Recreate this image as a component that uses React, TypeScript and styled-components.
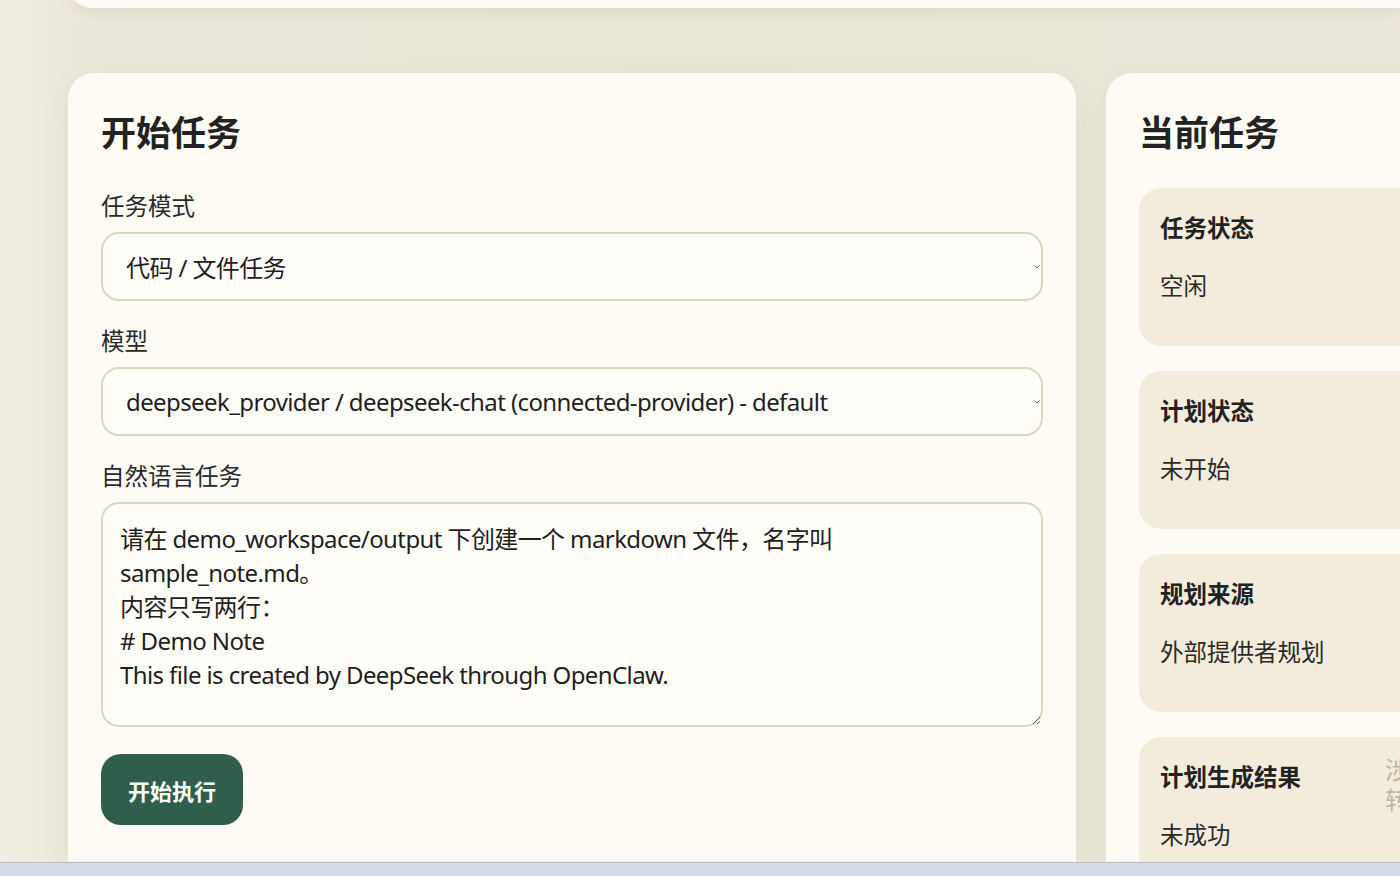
import styled, { createGlobalStyle } from 'styled-components';

const GlobalStyle = createGlobalStyle`
  html, body {
    margin: 0;
    padding: 0;
    height: 100%;
    overflow: hidden;
  }
  body {
    background: #efebdf;
    font-family: 'Noto Sans', 'Noto Sans CJK SC', sans-serif;
    color: #222;
  }
  * {
    box-sizing: border-box;
  }
`;

const statusList = [
  { id: 1, title: '任务状态', value: '空闲' },
  { id: 2, title: '计划状态', value: '未开始' },
  { id: 3, title: '规划来源', value: '外部提供者规划' },
  { id: 4, title: '计划生成结果', value: '未成功', hint: '涉及\n转换' },
];

const taskText = `请在 demo_workspace/output 下创建一个 markdown 文件，名字叫
sample_note.md。
内容只写两行：
# Demo Note
This file is created by DeepSeek through OpenClaw.`;

const Chevron = () => (
  <svg width='6' height='4' viewBox='0 0 6 4'>
    <path d='M0.5 0.5 L3 3 L5.5 0.5' fill='none' stroke='#555' strokeWidth='0.9' />
  </svg>
);

const App = () => {
  return (
    <Page>
      <GlobalStyle />
      <TopCard />
      <Columns>
        <Panel>
          <Title>开始任务</Title>
          <Field>
            <Label>任务模式</Label>
            <SelectBox>
              <span>代码 / 文件任务</span>
              <Chevron />
            </SelectBox>
          </Field>
          <Field>
            <Label>模型</Label>
            <SelectBox>
              <span>deepseek_provider / deepseek-chat (connected-provider) - default</span>
              <Chevron />
            </SelectBox>
          </Field>
          <Field>
            <Label>自然语言任务</Label>
            <TextArea defaultValue={taskText} />
          </Field>
          <RunButton>开始执行</RunButton>
        </Panel>
        <SidePanel>
          <Title>当前任务</Title>
          <CardList>
            {statusList.map((el) => (
              <StatusCard key={el.id}>
                <CardBody>
                  <CardTitle>{el.title}</CardTitle>
                  <CardValue>{el.value}</CardValue>
                </CardBody>
                {el.hint && <CardHint>{el.hint}</CardHint>}
              </StatusCard>
            ))}
          </CardList>
        </SidePanel>
      </Columns>
      <BottomBar />
    </Page>
  );
};

export default App;

const inputFont = `'Noto Sans', 'Noto Sans CJK SC', sans-serif`;

const Page = styled.div`
  height: 876px;
  overflow: hidden;
  display: flex;
  flex-direction: column;
  background: linear-gradient(90deg, #f1eee3 0%, #ebe7da 6%, #e9e5d7 50%, #ebe7da 100%);
`;

const TopCard = styled.div`
  height: 40px;
  margin: -32px 0 0 68px;
  background: #fdfbf4;
  border-radius: 0 0 0 24px;
  box-shadow: 0 4px 14px rgba(90, 80, 50, 0.08);
  flex-shrink: 0;
`;

const Columns = styled.div`
  display: flex;
  gap: 30px;
  padding-left: 68px;
  margin-top: 65px;
  flex: 1;
  min-height: 0;
`;

const Panel = styled.section`
  width: 1008px;
  flex-shrink: 0;
  background: #fdfbf4;
  border-radius: 26px 26px 0 0;
  padding: 38px 33px 0;
  box-shadow: 0 8px 30px rgba(90, 80, 50, 0.07);
`;

const SidePanel = styled(Panel)`
  width: 480px;
  padding: 38px 34px 0 33px;
`;

const Title = styled.h2`
  margin: 0 0 36px;
  font-size: 35px;
  line-height: 44px;
  font-weight: 700;
  color: #222;
`;

const Field = styled.div`
  display: flex;
  flex-direction: column;
  margin-bottom: 25px;

  &:last-of-type {
    margin-bottom: 27px;
  }
`;

const Label = styled.label`
  font-size: 23.5px;
  line-height: 30px;
  color: #2a2a2a;
  margin-bottom: 11px;
`;

const SelectBox = styled.div`
  height: 69px;
  display: flex;
  align-items: center;
  justify-content: space-between;
  padding: 0 1px 0 23px;
  border: 2px solid #ddd6c1;
  border-radius: 18px;
  background: #fffdf8;
  font-family: ${inputFont};
  font-size: 24px;
  letter-spacing: -0.6px;
  color: #1f1f1f;
`;

const TextArea = styled.textarea`
  height: 225px;
  padding: 18px 17px;
  border: 2px solid #ddd6c1;
  border-radius: 18px;
  background: #fffdf8;
  font-family: ${inputFont};
  font-size: 24px;
  letter-spacing: -0.6px;
  line-height: 34px;
  color: #1f1f1f;
  resize: vertical;
  outline: none;
`;

const RunButton = styled.button`
  height: 71px;
  padding: 0 27px;
  border: none;
  border-radius: 20px;
  background: #2f5f4c;
  color: #fff;
  font-family: 'Noto Sans', 'Noto Sans CJK SC', sans-serif;
  font-size: 22px;
  font-weight: 700;
  cursor: pointer;
`;

const CardList = styled.div`
  display: flex;
  flex-direction: column;
  gap: 25px;
  margin-top: -3px;
`;

const StatusCard = styled.div`
  min-height: 158px;
  display: flex;
  background: #f3ecdc;
  border-radius: 22px;
  padding: 24px 21px;
`;

const CardBody = styled.div`
  width: 225px;
  flex-shrink: 0;
`;

const CardTitle = styled.div`
  font-size: 23.5px;
  line-height: 32px;
  font-weight: 700;
  color: #222;
`;

const CardValue = styled.div`
  margin-top: 26px;
  font-size: 23.5px;
  line-height: 32px;
  color: #2a2a2a;
`;

const CardHint = styled.div`
  white-space: pre-line;
  margin-top: -6px;
  font-size: 24px;
  line-height: 30px;
  color: #bab5aa;
`;

const BottomBar = styled.div`
  height: 14px;
  flex-shrink: 0;
  background: #d5dce6;
  border-top: 1px solid #b7bec8;
`;
